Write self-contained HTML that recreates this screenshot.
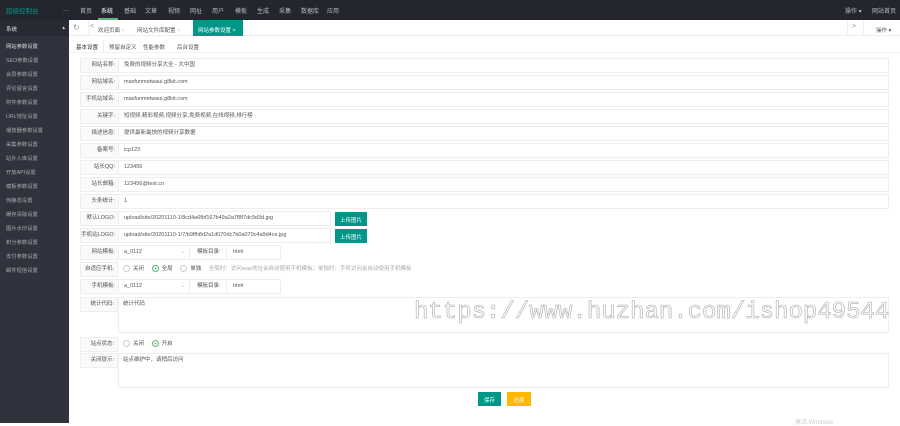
<!DOCTYPE html>
<html><head><meta charset="utf-8"><style>
*{margin:0;padding:0;box-sizing:border-box}
body{width:900px;height:423px;overflow:hidden;background:#fff;font-family:"Liberation Sans","Noto Sans CJK SC",sans-serif;font-size:5.5px;color:#333;position:relative}
.abs{position:absolute}
#top{left:0;top:0;width:900px;height:20px;background:#23262e}
#top span{position:absolute;top:6px;color:#bbb;font-size:6px}
#side{left:0;top:20px;width:69px;height:403px;background:#30333d}
#side .hd{height:16px;background:#282b33;color:#ddd;padding:5px 0 0 6px;font-size:5.5px}
#side .it{position:absolute;left:6px;color:#aaa;font-size:5.3px}
.row{position:absolute;left:80px;width:809px;height:15px;border:1px solid #eee}
.row .l{position:absolute;left:0;top:0;width:38px;height:13px;background:#fafafa;border-right:1px solid #eee;text-align:right;padding:3px 3px 0 0;line-height:7px;color:#555}
.row .v{position:absolute;left:43px;top:3px;line-height:7px;color:#555}
.btn{position:absolute;color:#fff;text-align:center;padding-top:4px;font-size:5.5px}
.rad{display:inline-block;width:7px;height:7px;border:1px solid #ccc;border-radius:50%;vertical-align:middle;margin-right:3px}
.rad.on{border-color:#5FB878;box-shadow:inset 0 0 0 1.5px #fff,inset 0 0 0 4px #5FB878}
</style></head><body>
<div id="top" class="abs">
<span style="left:6px;color:#009688;font-size:6.5px;top:5px">超级控制台</span>
<span style="left:63px">⋯</span>
<span style="left:80px">首页</span><span style="left:101px;color:#fff">系统</span><span style="left:124px">基础</span><span style="left:145px">文章</span><span style="left:168px">视频</span><span style="left:190px">网址</span><span style="left:212px">用户</span><span style="left:235px">模板</span><span style="left:257px">生成</span><span style="left:279px">采集</span><span style="left:301px">数据库</span><span style="left:327px">应用</span>
<div class="abs" style="left:98px;top:18px;width:20px;height:2px;background:#5FB878"></div>
<span style="left:845px">操作 ▾</span><span style="left:872px">网站首页</span>
</div>
<div id="side" class="abs"><div class="hd">系统 <span style="float:right;margin-right:4px">▴</span></div>
<div class="it" style="top:22px;color:#ddd">网站参数设置</div>
<div class="it" style="top:36px">SEO参数设置</div>
<div class="it" style="top:50px">会员参数设置</div>
<div class="it" style="top:64px">评论留言设置</div>
<div class="it" style="top:78px">附件参数设置</div>
<div class="it" style="top:92px">URL地址设置</div>
<div class="it" style="top:106px">播放器参数设置</div>
<div class="it" style="top:120px">采集参数设置</div>
<div class="it" style="top:134px">站外入库设置</div>
<div class="it" style="top:148px">开放API设置</div>
<div class="it" style="top:162px">模板参数设置</div>
<div class="it" style="top:176px">伪静态设置</div>
<div class="it" style="top:190px">缓存清除设置</div>
<div class="it" style="top:204px">图片水印设置</div>
<div class="it" style="top:218px">积分参数设置</div>
<div class="it" style="top:232px">支付参数设置</div>
<div class="it" style="top:246px">邮件短信设置</div>
</div>
<!-- tabs -->
<div class="abs" style="left:69px;top:20px;width:831px;height:16px;border-bottom:1px solid #eee"></div>
<div class="abs" style="left:73px;top:23px;color:#999;font-size:8px">↻</div>
<div class="abs" style="left:88px;top:20px;width:1px;height:16px;background:#eee"></div>
<div class="abs" style="left:90px;top:23px;color:#999;font-size:7px">&lt;</div>
<div class="abs" style="left:98px;top:26px;color:#555">欢迎页面 <span style="color:#ccc">×</span></div>
<div class="abs" style="left:137px;top:26px;color:#555">网站文件库配置 <span style="color:#ccc">×</span></div>
<div class="abs" style="left:193px;top:20px;width:50px;height:16px;background:#009688;color:#fff;padding:6px 0 0 5px">网站参数设置 ×</div>
<div class="abs" style="left:847px;top:20px;width:1px;height:16px;background:#eee"></div>
<div class="abs" style="left:852px;top:23px;color:#999;font-size:7px">&gt;</div>
<div class="abs" style="left:863px;top:20px;width:1px;height:16px;background:#eee"></div>
<div class="abs" style="left:876px;top:26px;color:#555">操作 ▾</div>
<!-- sub tabs -->
<div class="abs" style="left:69px;top:52px;width:831px;height:1px;background:#f2f2f2"></div>
<div class="abs" style="left:76px;top:43px;color:#333">基本设置</div>
<div class="abs" style="left:103px;top:40px;width:1px;height:12px;background:#eee"></div>
<div class="abs" style="left:109px;top:43px;color:#555">预留自定义</div>
<div class="abs" style="left:143px;top:43px;color:#555">性能参数</div>
<div class="abs" style="left:177px;top:43px;color:#555">后台设置</div>
<!-- rows -->
<div class="row" style="top:58px"><div class="l">网站名称:</div><div class="v">免费的视频分享大全 - 大中国</div></div>
<div class="row" style="top:75px"><div class="l">网站域名:</div><div class="v">maxfunmetwaui.g8kit.com</div></div>
<div class="row" style="top:92px"><div class="l">手机站域名:</div><div class="v">maxfunmetwaui.g8kit.com</div></div>
<div class="row" style="top:109px"><div class="l">关键字:</div><div class="v">短视频,精彩视频,视频分享,免费视频,在线视频,排行榜</div></div>
<div class="row" style="top:126px"><div class="l">描述信息:</div><div class="v">提供最新最快的视频分享数据</div></div>
<div class="row" style="top:143px"><div class="l">备案号:</div><div class="v">icp123</div></div>
<div class="row" style="top:160px"><div class="l">站长QQ:</div><div class="v">123456</div></div>
<div class="row" style="top:177px"><div class="l">站长邮箱:</div><div class="v">123456@test.cn</div></div>
<div class="row" style="top:194px"><div class="l">头条统计:</div><div class="v">1</div></div>
<div class="row" style="top:211px;width:251px"><div class="l">默认LOGO:</div><div class="v">upload/site/20201110-1/8cd4a6fbf167b49a2a7f8f7dc9d3d.jpg</div></div>
<div class="btn" style="left:335px;top:212px;width:32px;height:14px;background:#009688">上传图片</div>
<div class="row" style="top:228px;width:251px"><div class="l">手机站LOGO:</div><div class="v">upload/site/20201110-1/7/b9ffh8d2a1d070dc7b0a070c4a9d4ce.jpg</div></div>
<div class="btn" style="left:335px;top:229px;width:32px;height:14px;background:#009688">上传图片</div>
<div class="row" style="top:245px;width:201px"><div class="l">网站模板:</div><div class="v">a_0112</div><div class="v" style="left:100px;color:#aaa">⌄</div><div style="position:absolute;left:108px;top:-1px;width:1px;height:15px;background:#eee"></div><div class="v" style="left:116px;color:#555">模板目录:</div><div style="position:absolute;left:145px;top:-1px;width:1px;height:15px;background:#eee"></div><div class="v" style="left:152px">html</div></div>
<div class="row" style="top:262px;border:none"><div class="l" style="border:1px solid #eee;height:15px">自适应手机:</div><div class="v" style="left:43px;top:3px"><span class="rad"></span>关闭 &nbsp;&nbsp;&nbsp;&nbsp;<span class="rad on"></span>全局 &nbsp;&nbsp;&nbsp;&nbsp;<span class="rad"></span>单独 &nbsp;&nbsp;&nbsp;&nbsp;<span style="color:#aaa">全局时：访问wap地址会自动使用手机模板；单独时：手机访问会自动使用手机模板</span></div></div>
<div class="row" style="top:279px;width:201px"><div class="l">手机模板:</div><div class="v">a_0112</div><div class="v" style="left:100px;color:#aaa">⌄</div><div style="position:absolute;left:108px;top:-1px;width:1px;height:15px;background:#eee"></div><div class="v" style="left:116px;color:#555">模板目录:</div><div style="position:absolute;left:145px;top:-1px;width:1px;height:15px;background:#eee"></div><div class="v" style="left:152px">html</div></div>
<div class="row" style="top:297px;height:36px;border:none"><div class="l" style="border:1px solid #eee;height:15px">统计代码:</div><div style="position:absolute;left:38px;top:0;width:771px;height:36px;border:1px solid #eee"></div><div class="v" style="top:4px">统计代码</div></div>
<div class="row" style="top:337px;border:none"><div class="l" style="border:1px solid #eee;height:15px">站点状态:</div><div class="v" style="top:3px"><span class="rad"></span>关闭 &nbsp;&nbsp;&nbsp;&nbsp;<span class="rad on"></span>开启</div></div>
<div class="row" style="top:353px;height:35px;border:none"><div class="l" style="border:1px solid #eee;height:15px">关闭提示:</div><div style="position:absolute;left:38px;top:0;width:771px;height:35px;border:1px solid #eee"></div><div class="v" style="top:4px">站点维护中，请稍后访问</div></div>
<div class="btn" style="left:478px;top:392px;width:23px;height:14px;background:#009688">保存</div>
<div class="btn" style="left:507px;top:392px;width:24px;height:14px;background:#FFB800">还原</div>
<div class="abs" style="left:414px;top:299px;font-family:'Liberation Mono',monospace;font-size:24px;color:transparent;-webkit-text-stroke:0.6px #aaa;white-space:nowrap">https://www.huzhan.com/ishop49544</div>
<div class="abs" style="left:795px;top:417px;color:#ccc;font-size:6px">激活 Windows</div>
</body></html>
